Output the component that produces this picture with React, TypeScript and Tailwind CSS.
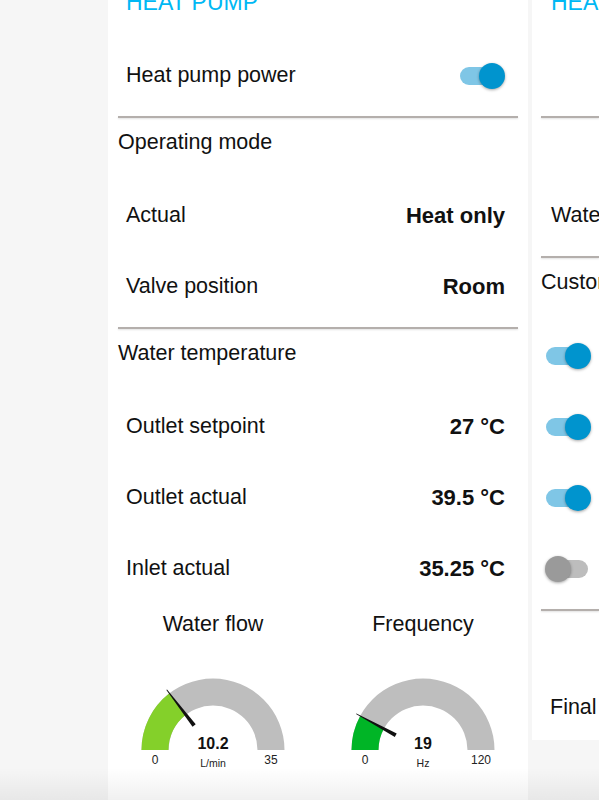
type GaugeProps = {
  label: string;
  value: number;
  max: number;
  unit: string;
  color: string;
};

function Gauge({ label, value, max, unit, color }: GaugeProps) {
  const cx = 85;
  const cy = 81;
  const ro = 71.5;
  const ri = 44.5;
  const a = (value / max) * Math.PI;
  const pt = (r: number, ang: number) => [cx - r * Math.cos(ang), cy - r * Math.sin(ang)];
  const [ox, oy] = pt(ro, a);
  const [ix, iy] = pt(ri, a);
  const bg = `M ${cx - ro} ${cy} A ${ro} ${ro} 0 0 1 ${cx + ro} ${cy} L ${cx + ri} ${cy} A ${ri} ${ri} 0 0 0 ${cx - ri} ${cy} Z`;
  const fg = `M ${cx - ro} ${cy} A ${ro} ${ro} 0 0 1 ${ox} ${oy} L ${ix} ${iy} A ${ri} ${ri} 0 0 0 ${cx - ri} ${cy} Z`;
  // needle: tapered from r=31 to r=76
  const ux = -Math.cos(a);
  const uy = -Math.sin(a);
  const px = Math.sin(a);
  const py = -Math.cos(a);
  const b = 31;
  const t = 76;
  const needle = [
    [cx + b * ux + 2 * px, cy + b * uy + 2 * py],
    [cx + t * ux + 0.4 * px, cy + t * uy + 0.4 * py],
    [cx + t * ux - 0.4 * px, cy + t * uy - 0.4 * py],
    [cx + b * ux - 2 * px, cy + b * uy - 2 * py],
  ]
    .map((p) => p.join(","))
    .join(" ");

  return (
    <div className="flex flex-col items-center">
      <div className="flex h-[30px] items-center text-[21.5px] text-[#111]">{label}</div>
      <svg width="170" height="110" viewBox="0 0 170 110" className="mt-[30px]">
        <path d={bg} fill="#bebebe" />
        <path d={fg} fill={color} />
        <polygon points={needle} fill="#111" />
        <text x={cx} y={80} textAnchor="middle" fontSize="16" fontWeight="700" fill="#111">
          {value}
        </text>
        <text x={cx} y={98} textAnchor="middle" fontSize="10.5" fill="#222">
          {unit}
        </text>
        <text x={cx - 58} y={94.5} textAnchor="middle" fontSize="12" fill="#222">
          0
        </text>
        <text x={cx + 58} y={94.5} textAnchor="middle" fontSize="12" fill="#222">
          {max}
        </text>
      </svg>
    </div>
  );
}

function Toggle({ on }: { on: boolean }) {
  return (
    <div className="relative flex h-[26px] w-[46px] items-center">
      <div
        className={
          on
            ? "ml-[1px] h-[18px] w-[42px] rounded-full bg-[#7fc6e6]"
            : "ml-[1px] h-[18px] w-[42px] rounded-full bg-[#bdbdbd]"
        }
      />
      <div
        className={
          on
            ? "absolute right-0 top-0 size-[26px] rounded-full bg-[#0094ce] shadow-[0_1px_3px_rgba(0,0,0,0.35)]"
            : "absolute left-0 top-0 size-[26px] rounded-full bg-[#9a9a9a] shadow-[0_1px_3px_rgba(0,0,0,0.35)]"
        }
      />
    </div>
  );
}

function Divider({ left }: { left: string }) {
  return (
    <div className={`mt-[5px] h-[2px] bg-[#b4afac] shadow-[0_1px_2px_rgba(0,0,0,0.12)] ${left}`} />
  );
}

function Row({ label, value }: { label: string; value: string }) {
  return (
    <div className="flex h-[71px] items-center justify-between pl-[18px] pr-[23px]">
      <span>{label}</span>
      <span className="text-[22px] font-bold">{value}</span>
    </div>
  );
}

export default function App() {
  return (
    <div
      className="relative flex h-[800px] w-[599px] overflow-hidden bg-[#f6f6f6] text-[21.5px] text-[#111]"
      style={{ fontFamily: '"Liberation Sans", Arial, sans-serif' }}
    >
      <div className="w-[108px] shrink-0" />

      {/* Heat pump card */}
      <div className="flex w-[420px] shrink-0 flex-col overflow-hidden bg-white">
        <div className="-mt-[9px] h-[23px] pl-[18px] text-[23px] leading-[23px] text-[#00b8f4]">HEAT PUMP</div>

        <div className="mt-[26px] flex h-[71px] items-center justify-between pl-[18px] pr-[23px]">
          <span>Heat pump power</span>
          <Toggle on />
        </div>

        <Divider left="mx-[10px]" />
        <div className="mt-[6px] flex h-[36px] items-center pl-[10px]">Operating mode</div>
        <div className="mt-[20px]">
          <Row label="Actual" value="Heat only" />
          <Row label="Valve position" value="Room" />
        </div>

        <Divider left="mx-[10px]" />
        <div className="mt-[6px] flex h-[36px] items-center pl-[10px]">Water temperature</div>
        <div className="mt-[20px]">
          <Row label="Outlet setpoint" value="27 °C" />
          <Row label="Outlet actual" value="39.5 °C" />
          <Row label="Inlet actual" value="35.25 °C" />
        </div>

        <div className="mt-[5px] grid grid-cols-2">
          <Gauge label="Water flow" value={10.2} max={35} unit="L/min" color="#84d02a" />
          <Gauge label="Frequency" value={19} max={120} unit="Hz" color="#00b526" />
        </div>
      </div>

      <div className="w-[4px] shrink-0" />

      {/* Second card, cut off at the right edge */}
      <div className="flex h-[740px] flex-1 flex-col overflow-hidden whitespace-nowrap bg-white">
        <div className="-mt-[9px] h-[23px] pl-[19px] text-[23px] leading-[23px] text-[#00b8f4]">HEAT PUMP</div>
        <div className="mt-[26px] h-[71px]" />
        <Divider left="ml-[9px]" />
        <div className="mt-[6px] h-[36px]" />
        <div className="mt-[20px] flex h-[71px] items-center pl-[19px]">Water temperature</div>
        <Divider left="ml-[9px]" />
        <div className="mt-[6px] flex h-[36px] items-center pl-[9px]">Customize</div>
        <div className="mt-[20px]">
          {[true, true, true, false].map((on, i) => (
            <div key={i} className="flex h-[71px] items-center pl-[13px]">
              <Toggle on={on} />
            </div>
          ))}
        </div>
        <Divider left="ml-[9px]" />
        <div className="mt-[66px] flex h-[60px] items-center pl-[18px]">Final temperature</div>
      </div>

      {/* bottom fade */}
      <div className="pointer-events-none absolute bottom-0 left-0 right-0 h-[32px] bg-gradient-to-b from-transparent to-[rgba(0,0,0,0.06)]" />
    </div>
  );
}
